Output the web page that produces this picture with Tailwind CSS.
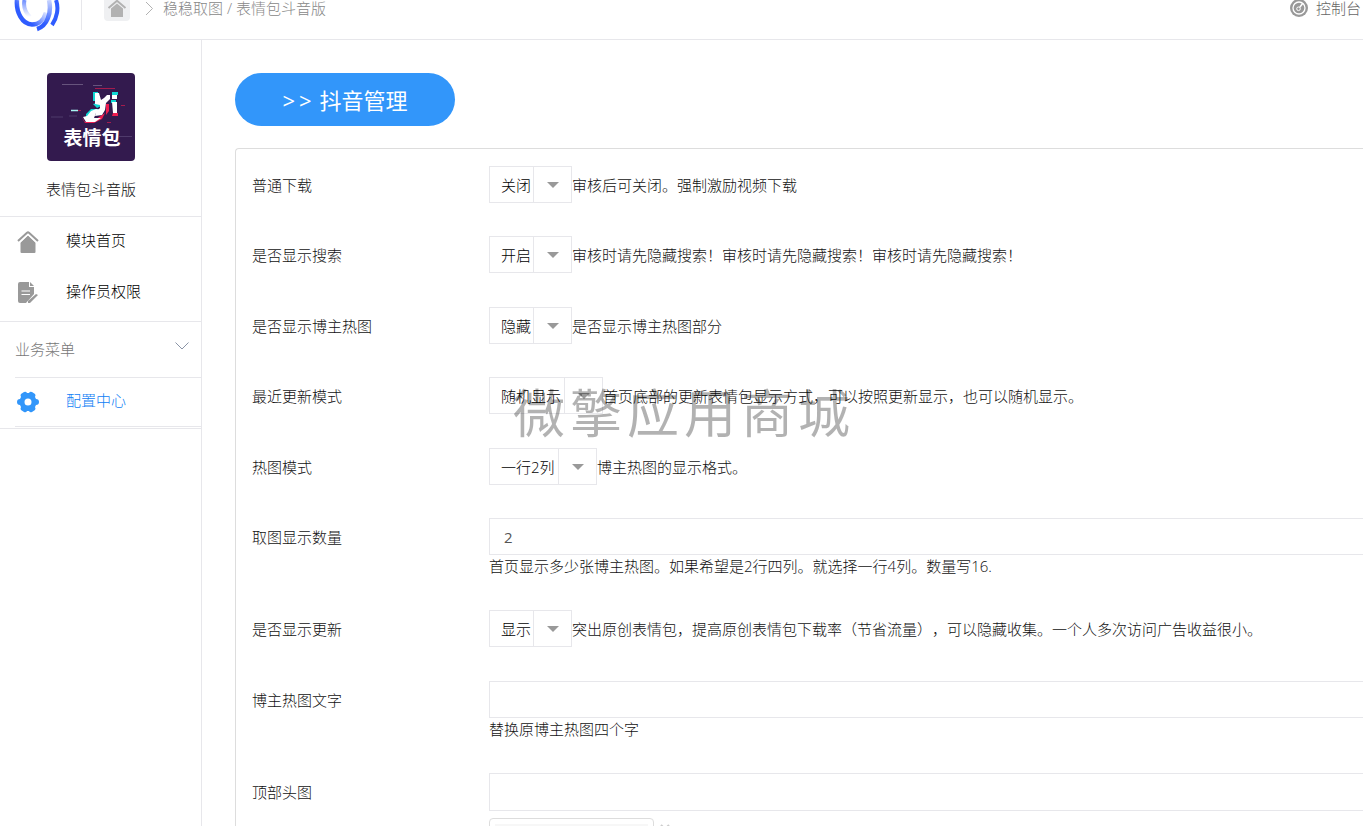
<!DOCTYPE html>
<html lang="zh-CN">
<head>
<meta charset="utf-8">
<title>表情包斗音版</title>
<script src="https://cdn.jsdelivr.net/npm/@tailwindcss/browser@4"></script>
</head>
<body class="h-screen overflow-hidden bg-white font-['Open_Sans','Noto_Sans_CJK_SC',sans-serif] text-[15px] leading-5 font-light text-[#111] [text-spacing-trim:space-all]">
<div class="flex h-full flex-col">
  <header class="flex h-10 shrink-0 items-start justify-between border-b border-[#e7e7eb]">
    <div class="flex">
      <a href="#" aria-label="首页" class="ml-3.5 block">
        <svg class="h-8 w-[46px]" viewBox="0 0 46 32" fill="none">
          <defs>
            <linearGradient id="g1" gradientUnits="userSpaceOnUse" x1="18" y1="24" x2="32" y2="12"><stop offset="0" stop-color="#2f5cff"/><stop offset="1" stop-color="#2f5cff" stop-opacity="0.150"/></linearGradient>
            <linearGradient id="g2" gradientUnits="userSpaceOnUse" x1="0" y1="0" x2="0" y2="30"><stop offset="0" stop-color="#2f5cff" stop-opacity="0.250"/><stop offset=".8" stop-color="#2f5cff"/></linearGradient>
            <linearGradient id="g3" gradientUnits="userSpaceOnUse" x1="0" y1="0" x2="0" y2="17"><stop offset="0" stop-color="#2f5cff" stop-opacity="0.700"/><stop offset="1" stop-color="#2f5cff" stop-opacity="0"/></linearGradient>
          </defs>
          <path d="M3 0C2 12 8 24 18 24.500c7 0 12-5 14-12" stroke="url(#g1)" stroke-width="4.500"/>
          <path d="M10.500 0C9 7 11 12 16 17" stroke="url(#g3)" stroke-width="4"/>
          <path d="M35 0c3 13-2 26-12 29" stroke="url(#g2)" stroke-width="4.500"/>
          <path d="M42 0c3 8 1 18-4 25" stroke="#2f5cff" stroke-width="4"/>
        </svg>
      </a>
      <span class="ml-[21px] h-[30px] w-px bg-[#e7e7eb]"></span>
      <nav class="ml-[22px] flex h-[21px] text-[#888]">
        <a href="#" aria-label="主页" class="block w-[26px] overflow-hidden rounded-b bg-[#eff0f2]">
          <svg class="h-[21px] w-full" viewBox="0 0 26 21"><path d="M7 8.500 13 3.500l6 5V17H7z" fill="#b2b2b2"/><path d="M4.500 8 13 .8 21.500 8" fill="none" stroke="#b2b2b2" stroke-width="2"/></svg>
        </a>
        <svg class="ml-3.5 size-[18px]" viewBox="0 0 18 18" fill="none" stroke="#b2b2b2"><path d="m2 2 6.500 6.500L2 15"/></svg>
        <span class="-mt-0.5 pl-px">稳稳取图 / 表情包斗音版</span>
      </nav>
    </div>
    <a href="#" class="flex h-4 items-center gap-2 whitespace-nowrap pr-0.5 text-[#666]">
      <svg class="size-[18px]" viewBox="0 0 18 18" fill="none"><circle cx="9" cy="9" r="9" fill="#999"/><circle cx="9" cy="9" r="6" stroke="#fff" stroke-width="1.300"/><circle cx="8.500" cy="9.800" r="1.800" stroke="#fff"/><path d="m9.800 8.300 3-4" stroke="#fff" stroke-width="1.500"/></svg>
      控制台
    </a>
  </header>
  <div class="flex min-h-0 flex-1">
    <aside class="w-[202px] shrink-0 border-r border-[#e7e7eb]">
      <div class="flex h-[177px] flex-col items-center border-b border-[#e7e7eb] pt-[33px] pr-[19px]">
        <svg class="size-[88px] rounded" viewBox="0 0 88 88" role="img" aria-label="表情包">
          <rect width="88" height="88" fill="#331a4e"/>
          <path d="M15 11.500h21M46 12.500h9" stroke="#8a7c9d" opacity=".6"/>
          <path d="M48 15.500h20M74 32.500h4M60 49.500h4" stroke="#a51b4d"/>
          <path d="M4 44h12M22 43h8M72 63.500h13" stroke="#4f3a6b"/>
          <path d="M24 37.500h7" stroke="#a9f5f2" stroke-width="1.500"/><path d="M31 37.500h3" stroke="#a51b4d"/>
          <g fill="#11d8d4"><path d="M46 19h5v9h-5zM65 19h6v3h-6zM46 31l8-2 4 2-8 4zM64 27h5v3h-5zM39 41l5-5h9l-6 3-4 5h-4z"/></g>
          <g fill="#ee1d50"><path d="M66 40h5v3h-6zM59 31h3v7l-3 4zM34 43l4 6h8l6-5 6-4-3 6-8 4H38z"/></g>
          <g fill="#fff"><path d="M48 20h4l2 7 3-2 3-3h3v4l-4 4-1 7-3 5-7 1 1-4 4-4v-3l-5-1zM65 22h5v4h-5zM65 29h5v11h-4z"/><path d="M40 43l4-5 5-2 5 1-5 3-2 5h7l-6 4H39l-3-5z"/></g>
          <text x="45" y="72" text-anchor="middle" fill="#fff" font-size="19" font-weight="700">表情包</text>
        </svg>
        <p class="mt-[18px]">表情包斗音版</p>
      </div>
      <nav>
        <a href="#" class="flex h-[51px] items-start gap-[27px] pt-3.5 pl-[17px] text-black">
          <svg class="size-[22px]" viewBox="0 0 22 22"><path d="m3.500 11.500 7.500-7 7.500 7V21a1 1 0 0 1-1 1h-13a1 1 0 0 1-1-1z" fill="#999"/><path d="M1 11 10 2.200q1-.8 2 0L21 11" fill="none" stroke="#fff" stroke-width="4"/><path d="M1 10 10 1.800q1-.8 2 0L21 10" fill="none" stroke="#999" stroke-width="2"/></svg>
          <span class="-mt-px">模块首页</span>
        </a>
        <a href="#" class="flex h-[53px] items-start gap-[27px] pt-3.5 pl-[17px] text-black">
          <svg class="size-[22px]" viewBox="0 0 22 22"><path d="M3 0h9v5h5v7l-8 9H3q-2 0-2-2V2q0-2 2-2zM13 0l4 4h-4zM19 12l2 1-8 8h-2v-2z" fill="#999"/><path d="M4.500 9h8.500M4.500 12.500h8.500" stroke="#fff" stroke-width="1.200"/></svg>
          <span class="-mt-px">操作员权限</span>
        </a>
      </nav>
      <button type="button" class="flex h-14 w-full items-center justify-between border-t border-[#e7e7eb] pr-3 pb-0.5 pl-[15px] font-light text-[#777]">
        业务菜单
        <svg class="-mt-1.5 h-2 w-3.5" viewBox="0 0 14 8" fill="none" stroke="#8a94a6"><path d="m.5.500 6.500 6.500 6.500-6.500"/></svg>
      </button>
      <a href="#" class="ml-[15px] flex h-[50px] items-start gap-[27px] border-y border-[#e7e7eb] pt-[13px] pl-0.5 text-[#0f80f5]">
        <svg class="size-[22px]" viewBox="0 0 22 22"><path fill="#3296fa" fill-rule="evenodd" d="M7 1q2-1 3 1h2q1-2 3-1l3 2q1 1 0 3l1 2q3 0 3 3t-3 3l-1 2q1 2 0 3l-3 2q-2 1-3-1h-2q-1 2-3 1l-3-2q-1-1 0-3l-1-2q-3 0-3-3t3-3l1-2q-1-2 0-3zM11 7.500a3.500 3.500 0 1 0 0 7 3.500 3.500 0 0 0 0-7"/></svg>
        <span class="-mt-px">配置中心</span>
      </a>
      <hr class="mt-px border-[#e7e7eb]">
    </aside>
    <main class="flex min-w-0 flex-1 flex-col overflow-hidden pt-[33px] pl-[33px]">
      <button type="button" class="flex h-[53px] w-[220px] shrink-0 items-center justify-center gap-1 rounded-full bg-[#3296fa] text-[22px] leading-8 font-normal text-white"><span>&gt;</span><span>&gt;</span><span class="pl-1">抖音管理</span></button>
      <form class="mt-[22px] min-h-0 flex-1 overflow-hidden rounded-tl border-t border-l border-[#ddd] pt-[17px] pl-4">
        <div class="mb-[33px] flex h-[37px] items-center">
          <label for="download" class="w-[237px] shrink-0">普通下载</label>
          <span class="relative flex h-full"><select id="download" class="h-full w-[83px] appearance-none border border-[#e7e7eb] pl-[11px] text-black"><option>关闭</option></select><span class="pointer-events-none absolute inset-y-0 right-0 flex w-[39px] items-center justify-center border border-[#e7e7eb]"><svg class="h-1.5 w-3" viewBox="0 0 12 6"><path d="M0 0h12L6 6z" fill="#999"/></svg></span></span>
          <span class="whitespace-nowrap">审核后可关闭。强制激励视频下载</span>
        </div>
        <div class="mb-[34px] flex h-[37px] items-center">
          <label for="search" class="w-[237px] shrink-0">是否显示搜索</label>
          <span class="relative flex h-full"><select id="search" class="h-full w-[83px] appearance-none border border-[#e7e7eb] pl-[11px] text-black"><option>开启</option></select><span class="pointer-events-none absolute inset-y-0 right-0 flex w-[39px] items-center justify-center border border-[#e7e7eb]"><svg class="h-1.5 w-3" viewBox="0 0 12 6"><path d="M0 0h12L6 6z" fill="#999"/></svg></span></span>
          <span class="whitespace-nowrap">审核时请先隐藏搜索！审核时请先隐藏搜索！审核时请先隐藏搜索！</span>
        </div>
        <div class="mb-[33px] flex h-[37px] items-center">
          <label for="hot" class="w-[237px] shrink-0">是否显示博主热图</label>
          <span class="relative flex h-full"><select id="hot" class="h-full w-[83px] appearance-none border border-[#e7e7eb] pl-[11px] text-black"><option>隐藏</option></select><span class="pointer-events-none absolute inset-y-0 right-0 flex w-[39px] items-center justify-center border border-[#e7e7eb]"><svg class="h-1.5 w-3" viewBox="0 0 12 6"><path d="M0 0h12L6 6z" fill="#999"/></svg></span></span>
          <span class="whitespace-nowrap">是否显示博主热图部分</span>
        </div>
        <div class="mb-[34px] flex h-[37px] items-center">
          <label for="recent" class="w-[237px] shrink-0">最近更新模式</label>
          <span class="relative flex h-full"><select id="recent" class="h-full w-[114px] appearance-none border border-[#e7e7eb] pl-[11px] text-black"><option>随机显示</option></select><span class="pointer-events-none absolute inset-y-0 right-0 flex w-[39px] items-center justify-center border border-[#e7e7eb]"><svg class="h-1.5 w-3" viewBox="0 0 12 6"><path d="M0 0h12L6 6z" fill="#999"/></svg></span></span>
          <span class="whitespace-nowrap">首页底部的更新表情包显示方式，可以按照更新显示，也可以随机显示。</span>
        </div>
        <div class="mb-[33px] flex h-[37px] items-center">
          <label for="layout" class="w-[237px] shrink-0">热图模式</label>
          <span class="relative flex h-full"><select id="layout" class="h-full w-[108px] appearance-none border border-[#e7e7eb] pl-[11px] text-black"><option>一行2列</option></select><span class="pointer-events-none absolute inset-y-0 right-0 flex w-[39px] items-center justify-center border border-[#e7e7eb]"><svg class="h-1.5 w-3" viewBox="0 0 12 6"><path d="M0 0h12L6 6z" fill="#999"/></svg></span></span>
          <span class="whitespace-nowrap">博主热图的显示格式。</span>
        </div>
        <div class="mb-[34px] flex items-start">
          <label for="count" class="flex h-[37px] w-[237px] shrink-0 items-center">取图显示数量</label>
          <div class="min-w-0 flex-1">
            <input id="count" type="text" value="2" class="block h-[37px] w-full border border-r-0 border-[#e7e7eb] px-3.5 font-normal text-[#555]">
            <p class="mt-px">首页显示多少张博主热图。如果希望是2行四列。就选择一行4列。数量写16.</p>
          </div>
        </div>
        <div class="mb-[34px] flex h-[37px] items-center">
          <label for="update" class="w-[237px] shrink-0">是否显示更新</label>
          <span class="relative flex h-full"><select id="update" class="h-full w-[83px] appearance-none border border-[#e7e7eb] pl-[11px] text-black"><option>显示</option></select><span class="pointer-events-none absolute inset-y-0 right-0 flex w-[39px] items-center justify-center border border-[#e7e7eb]"><svg class="h-1.5 w-3" viewBox="0 0 12 6"><path d="M0 0h12L6 6z" fill="#999"/></svg></span></span>
          <span class="whitespace-nowrap">突出原创表情包，提高原创表情包下载率（节省流量），可以隐藏收集。一个人多次访问广告收益很小。</span>
        </div>
        <div class="mb-[34px] flex items-start">
          <label for="hottext" class="flex h-[37px] w-[237px] shrink-0 items-center">博主热图文字</label>
          <div class="min-w-0 flex-1">
            <input id="hottext" type="text" class="block h-[37px] w-full border border-r-0 border-[#e7e7eb] px-3.5 font-normal text-[#555]">
            <p class="mt-px">替换原博主热图四个字</p>
          </div>
        </div>
        <div class="flex items-start">
          <label for="banner" class="flex h-[37px] w-[237px] shrink-0 items-center">顶部头图</label>
          <div class="min-w-0 flex-1">
            <input id="banner" type="text" class="block h-[38px] w-full border border-r-0 border-[#e7e7eb] px-3.5 font-normal text-[#555]">
            <div class="mt-[7px] flex gap-1.5">
              <div class="w-[165px] rounded border border-[#ddd] p-[5px]"><div class="h-[150px] bg-[#f7f7f7]"></div></div>
              <button type="button" aria-label="删除" class="mt-1.5 size-2.5"><svg viewBox="0 0 10 10" stroke="#ccc" stroke-width="2"><path d="m1 1 8 8M9 1 1 9"/></svg></button>
            </div>
          </div>
        </div>
      </form>
    </main>
  </div>
</div>
<div class="pointer-events-none fixed inset-0 flex items-center justify-center gap-[5px] text-[52px] leading-none font-normal text-black/30"><span>微</span><span>擎</span><span>应</span><span>用</span><span>商</span><span>城</span></div>
</body>
</html>
